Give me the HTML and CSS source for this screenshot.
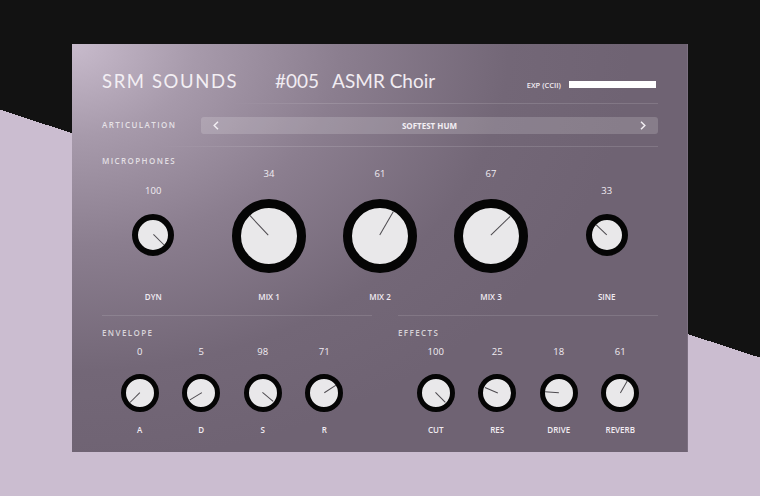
FILE: index.html
```html
<!DOCTYPE html>
<html lang="en">
<head>
    <meta charset="UTF-8">
    <meta name="viewport" content="width=device-width, initial-scale=1.0">
    <title>SRM Sounds - ASMR Choir</title>
    <link rel="stylesheet" href="styles.css">
</head>
<body>
    <!-- plugin panel -->
    <main class="panel">
        <header class="top">
            <div class="brand">SRM SOUNDS</div>
            <div class="patch">
                <span class="patch-num">#005</span>
                <span class="patch-name">ASMR Choir</span>
            </div>
            <div class="exp">
                <span class="exp-label">EXP (CCII)</span>
                <div class="exp-bar"></div>
            </div>
        </header>

        <div class="rule rule-head"></div>

        <!-- articulation -->
        <div class="artic">
            <div class="sec-label">ARTICULATION</div>
            <div class="selector">
                <svg class="chev" width="6" height="9" viewBox="0 0 6 9"><polyline points="5,0.8 1.2,4.5 5,8.2" fill="none" stroke="#f2eef3" stroke-width="1.5"/></svg>
                <span class="selector-text">SOFTEST HUM</span>
                <svg class="chev" width="6" height="9" viewBox="0 0 6 9"><polyline points="1,0.8 4.8,4.5 1,8.2" fill="none" stroke="#f2eef3" stroke-width="1.5"/></svg>
            </div>
        </div>

        <div class="rule rule-artic"></div>

        <!-- microphones -->
        <section class="mics">
            <div class="sec-label">MICROPHONES</div>
            <div class="mic-row">
                <div class="mic-col mic-first">
                    <div class="mic-top">
                        <div class="value">100</div>
                        <div class="knob knob-md"><i style="--a: 135deg"></i></div>
                    </div>
                    <div class="knob-name">DYN</div>
                </div>
                <div class="mic-col">
                    <div class="mic-top">
                        <div class="value">34</div>
                        <div class="knob knob-lg"><i style="--a: -43deg"></i></div>
                    </div>
                    <div class="knob-name">MIX 1</div>
                </div>
                <div class="mic-col">
                    <div class="mic-top">
                        <div class="value">61</div>
                        <div class="knob knob-lg"><i style="--a: 30deg"></i></div>
                    </div>
                    <div class="knob-name">MIX 2</div>
                </div>
                <div class="mic-col">
                    <div class="mic-top">
                        <div class="value">67</div>
                        <div class="knob knob-lg"><i style="--a: 46deg"></i></div>
                    </div>
                    <div class="knob-name">MIX 3</div>
                </div>
                <div class="mic-col mic-last">
                    <div class="mic-top">
                        <div class="value">33</div>
                        <div class="knob knob-md"><i style="--a: -46deg"></i></div>
                    </div>
                    <div class="knob-name">SINE</div>
                </div>
            </div>
        </section>

        <!-- envelope + effects -->
        <div class="bottom">
            <section class="group">
                <div class="rule"></div>
                <div class="sec-label">ENVELOPE</div>
                <div class="knob-grid">
                    <div class="small-col">
                        <div class="value">0</div>
                        <div class="knob knob-sm"><i style="--a: -135deg"></i></div>
                        <div class="knob-name">A</div>
                    </div>
                    <div class="small-col">
                        <div class="value">5</div>
                        <div class="knob knob-sm"><i style="--a: -121deg"></i></div>
                        <div class="knob-name">D</div>
                    </div>
                    <div class="small-col">
                        <div class="value">98</div>
                        <div class="knob knob-sm"><i style="--a: 130deg"></i></div>
                        <div class="knob-name">S</div>
                    </div>
                    <div class="small-col">
                        <div class="value">71</div>
                        <div class="knob knob-sm"><i style="--a: 57deg"></i></div>
                        <div class="knob-name">R</div>
                    </div>
                </div>
            </section>
            <section class="group">
                <div class="rule"></div>
                <div class="sec-label">EFFECTS</div>
                <div class="knob-grid">
                    <div class="small-col">
                        <div class="value">100</div>
                        <div class="knob knob-sm"><i style="--a: 135deg"></i></div>
                        <div class="knob-name">CUT</div>
                    </div>
                    <div class="small-col">
                        <div class="value">25</div>
                        <div class="knob knob-sm"><i style="--a: -67deg"></i></div>
                        <div class="knob-name">RES</div>
                    </div>
                    <div class="small-col">
                        <div class="value">18</div>
                        <div class="knob knob-sm"><i style="--a: -86deg"></i></div>
                        <div class="knob-name">DRIVE</div>
                    </div>
                    <div class="small-col">
                        <div class="value">61</div>
                        <div class="knob knob-sm"><i style="--a: 30deg"></i></div>
                        <div class="knob-name">REVERB</div>
                    </div>
                </div>
            </section>
        </div>
    </main>
</body>
</html>
```

FILE: styles.css
```css
* {
    margin: 0;
    padding: 0;
    box-sizing: border-box;
}

html {
    height: 100%;
}

/* black top, lavender wedge below the diagonal */
body {
    height: 100%;
    padding: 44px 0 0 72px;
    font-family: 'Open Sans', 'Liberation Sans', sans-serif;
    color: #f1ecf2;
    background: linear-gradient(198.07deg, #121212 340px, #cbbdd0 340px);
    overflow: hidden;
}

/* panel */
.panel {
    width: 616px;
    height: 408px;
    padding: 0 30px;
    background:
        radial-gradient(ellipse 560px 420px at 0 0, #c8bbcc 0%, #a79aab 22%, #8b7e8f 48%, #736777 78%, #6f6373 100%);
    box-shadow: inset -1px 0 0 #7c7081;
}

/* header */
.top {
    height: 59px;
    padding-top: 14px;
    display: flex;
    align-items: center;
    font-family: 'Lato', 'Open Sans', sans-serif;
}

.brand {
    font-size: 18.5px;
    letter-spacing: 1.6px;
    color: #f3eff4;
    width: 173px;
}

.patch {
    display: flex;
    gap: 13px;
    font-size: 19px;
    color: #f1ecf2;
}

.exp {
    margin-left: auto;
    margin-top: 8px;
    display: flex;
    align-items: center;
    gap: 8px;
    margin-right: 2px;
}

.exp-label {
    font-family: 'Open Sans', sans-serif;
    font-size: 7.5px;
    font-weight: 600;
    color: #f1ecf2;
}

.exp-bar {
    width: 87px;
    height: 7px;
    background: #ffffff;
}

/* divider lines */
.rule {
    height: 1px;
    background: rgba(255, 255, 255, 0.12);
}

.rule-head {
    margin-left: 131px;
    background: linear-gradient(to right, rgba(255, 255, 255, 0), rgba(255, 255, 255, 0.13) 20%);
}

.rule-artic {
    margin-left: 56px;
    background: linear-gradient(to right, rgba(255, 255, 255, 0), rgba(255, 255, 255, 0.13) 20%);
}

.sec-label {
    font-size: 8px;
    font-weight: 600;
    letter-spacing: 1.4px;
    line-height: 12px;
    color: rgba(255, 255, 255, 0.72);
}

/* articulation */
.artic {
    height: 42px;
    display: flex;
    align-items: center;
}

.artic .sec-label {
    width: 99px;
}

.selector {
    flex: 1;
    height: 17px;
    border-radius: 3px;
    background: rgba(255, 255, 255, 0.17);
    display: flex;
    align-items: center;
    justify-content: space-between;
    padding: 0 12px;
}

.selector-text {
    font-size: 8px;
    font-weight: 700;
    color: #f3eff4;
}

/* microphones */
.mics {
    padding: 8px 0 12px;
}

.mic-row {
    display: grid;
    grid-template-columns: 1fr 111px 111px 111px 1fr;
}

.mic-col {
    display: flex;
    flex-direction: column;
    align-items: center;
}

.mic-first {
    padding-right: 9px;
}

.mic-last {
    padding-left: 9px;
}

.mic-top {
    height: 106px;
    display: flex;
    flex-direction: column;
    align-items: center;
    justify-content: center;
}

.value {
    font-size: 9.5px;
    line-height: 12px;
    color: #f1ecf2;
}

.knob-name {
    font-size: 8px;
    font-weight: 600;
    line-height: 12px;
    color: #f1ecf2;
}

.mic-col .knob-name {
    margin-top: 18px;
}

/* knobs */
.knob {
    position: relative;
    border-radius: 50%;
    border: 9px solid #050505;
    background: #e9e8ea;
}

.knob i {
    position: absolute;
    left: calc(50% - 0.6px);
    bottom: 50%;
    width: 1.2px;
    height: 49%;
    background: #4d4a4f;
    transform-origin: 50% 100%;
    transform: rotate(var(--a));
}

.knob-lg {
    width: 74px;
    height: 74px;
    margin-top: 19px;
}

.knob-md {
    width: 42px;
    height: 42px;
    border-width: 6px;
    margin-top: 17px;
}

.knob-sm {
    width: 38px;
    height: 38px;
    border-width: 5px;
    margin: 16px 0 12px;
}

/* envelope / effects */
.bottom {
    display: grid;
    grid-template-columns: 270px 1fr;
    column-gap: 26px;
}

.group .sec-label {
    margin-top: 11px;
}

.knob-grid {
    display: grid;
    grid-template-columns: repeat(4, 61.5px);
    padding-left: 7px;
    margin-top: 7px;
}

.small-col {
    display: flex;
    flex-direction: column;
    align-items: center;
}
```
